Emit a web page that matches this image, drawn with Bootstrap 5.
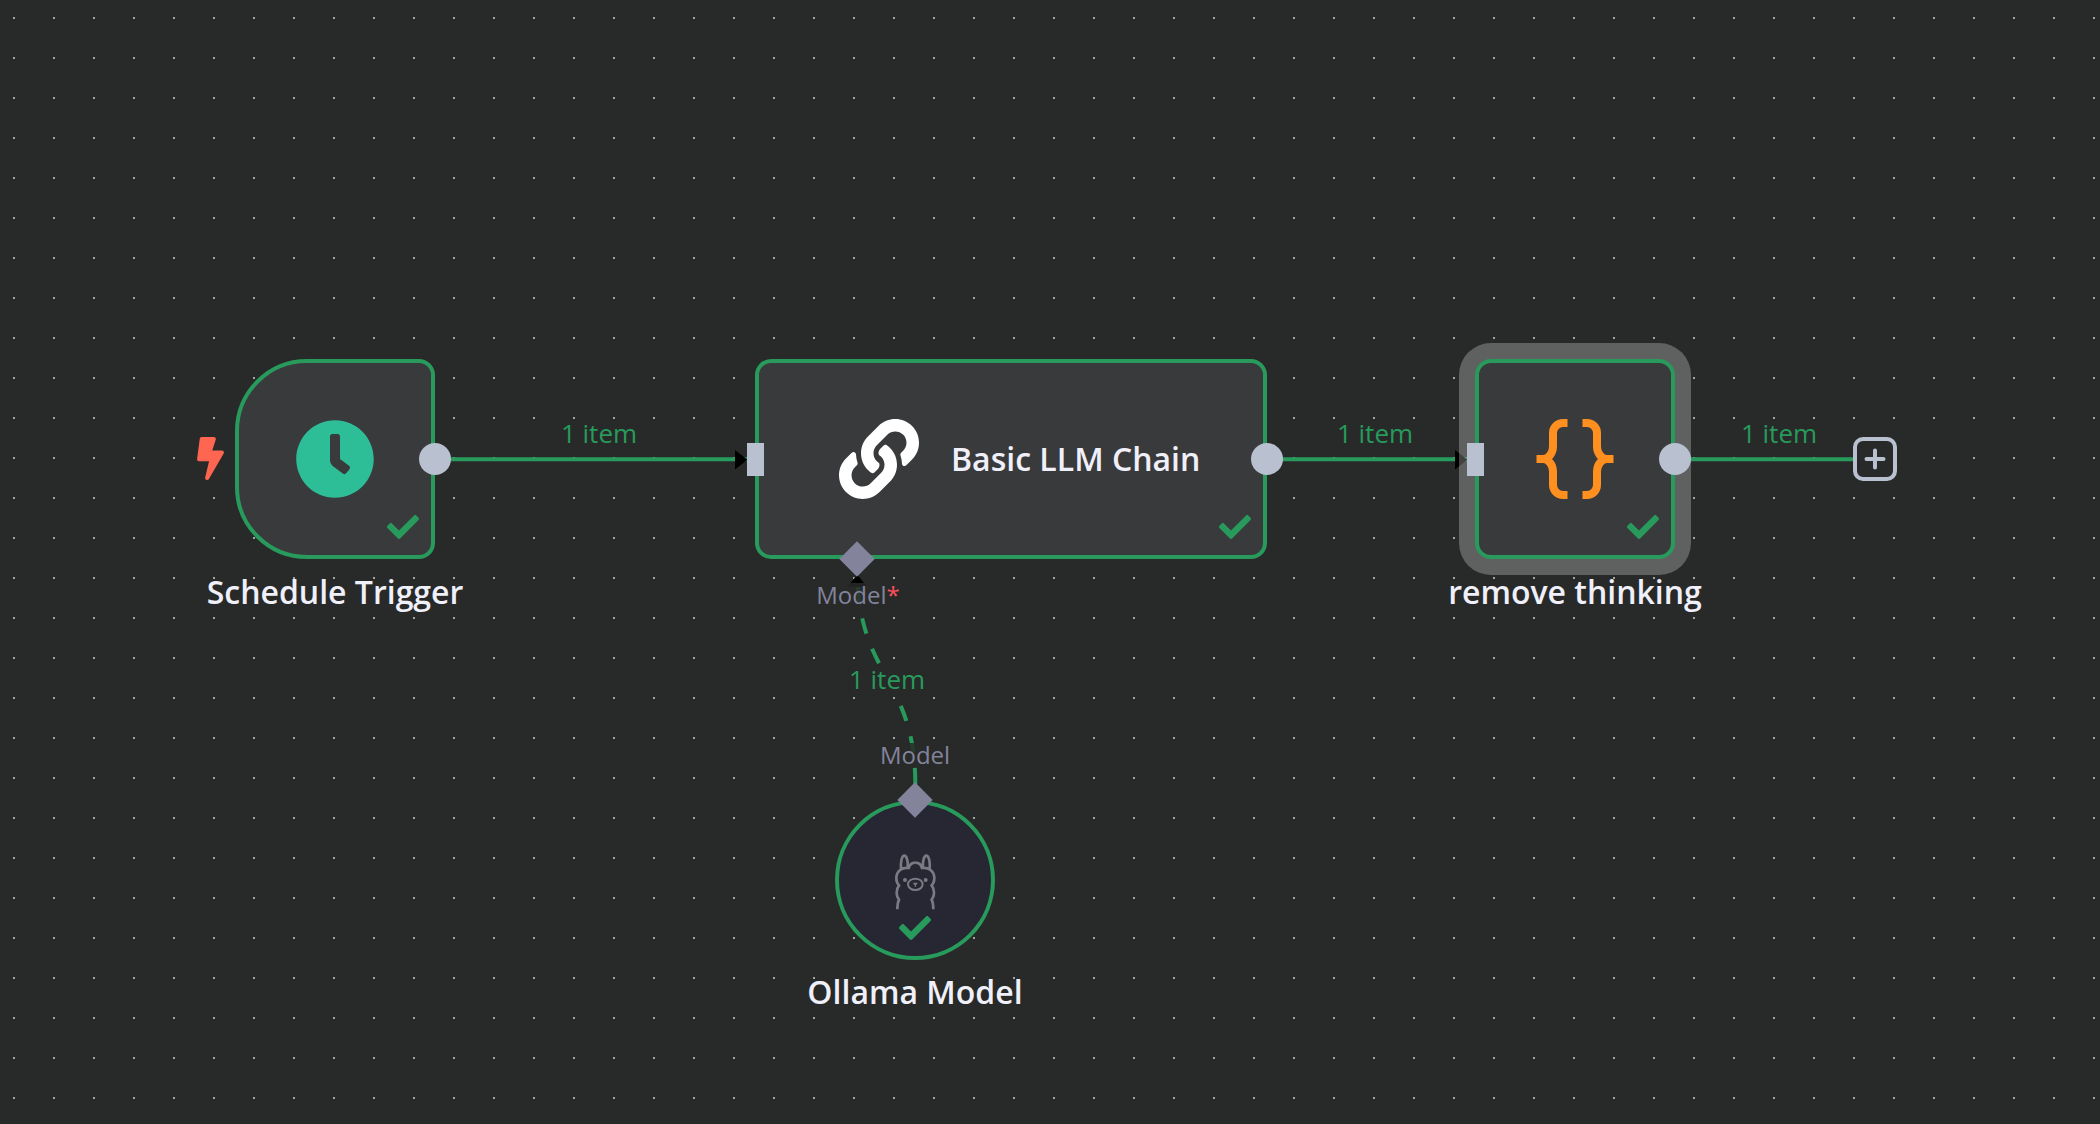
<!DOCTYPE html>
<html lang="en" data-bs-theme="dark">
<head>
<meta charset="utf-8">
<meta name="viewport" content="width=device-width, initial-scale=1">
<title>Workflow canvas</title>
<link rel="stylesheet" href="https://cdn.jsdelivr.net/npm/bootstrap@5.3.0/dist/css/bootstrap.min.css">
<style>
:root { --ok: #279a5c; --canvas: #282a29; --port: #b9c0cf; --sub: #83839c; }
body { background: var(--canvas); font-family: "Open Sans", sans-serif; color: #f0f0fa; }
.flow-canvas {
  background: conic-gradient(from 90deg at 38px 38px, #a3a4a4 90deg, transparent 0) -25px -21px / 40px 40px;
}
.wires { overflow: visible; }
.wire { fill: none; stroke: var(--ok); stroke-width: 4; }
.node { border: 4px solid var(--ok); border-radius: 16px; background: #393a3c; width: 200px; height: 200px; }
.node-trigger { left: 235px; top: 359px; border-radius: 72px 16px 16px 72px; }
.node-chain { left: 755px; top: 359px; width: 512px; padding-left: 80px; gap: 32px; }
.node-code { left: 1475px; top: 359px; box-shadow: 0 0 0 16px rgba(255, 255, 255, .26); }
.node-model { left: 835px; top: 800px; width: 160px; height: 160px; border-radius: 50%; background: #272733; }
.node-name { font-size: 32px; line-height: 44px; font-weight: 600; }
.caption-box { transform: translateX(-50%); }
.cap-trigger { left: 335px; top: 570px; }
.cap-code { left: 1575px; top: 570px; }
.cap-model { left: 915px; top: 970px; }
.wire-label { transform: translateX(-50%); font-size: 26px; line-height: 28px; color: var(--ok); }
.lab-a { left: 599px; top: 419px; }
.lab-b { left: 1375px; top: 419px; }
.lab-c { left: 1779px; top: 419px; }
.lab-d { left: 887px; top: 665px; background: var(--canvas); }
.port-label { transform: translateX(-50%); font-size: 24px; line-height: 24px; color: var(--sub); background: rgba(40, 42, 41, .85); }
.port-in { left: 858px; top: 583px; }
.port-out { left: 915px; top: 743px; }
.required { color: #ff4f5e; }
.port { background: var(--port); top: 80px; }
.port-main-out { width: 32px; height: 32px; border-radius: 50%; right: -20px; }
.port-main-in { width: 17px; height: 33px; left: -12px; }
.diamond { width: 25px; height: 25px; background: var(--sub); transform: translate(-50%, -50%) rotate(45deg); }
.diamond-chain { left: 98px; top: 196px; }
.diamond-model { left: 76px; top: -4px; }
.tick { width: 32px; height: 32px; right: 12px; bottom: 12px; fill: var(--ok); }
.node-model .tick { right: 60px; bottom: 12px; }
.bolt { left: 197px; top: 437px; width: 27px; height: 43px; fill: #ff6652; }
.add-node { left: 1853px; top: 437px; width: 44px; height: 44px; border: 4px solid var(--port); border-radius: 10px; background: var(--canvas); }
.llama { width: 42px; height: 58px; left: 55px; top: 49px; }
</style>
</head>
<body>
<svg class="d-none" aria-hidden="true">
  <symbol id="tick" viewBox="0 0 512 512"><path d="M173.898 439.404l-166.4-166.4c-9.997-9.997-9.997-26.206 0-36.204l36.203-36.204c9.997-9.998 26.207-9.998 36.204 0L192 312.69 432.095 72.596c9.997-9.997 26.207-9.997 36.204 0l36.203 36.204c9.997 9.997 9.997 26.206 0 36.204l-294.4 294.401c-9.998 9.997-26.207 9.997-36.204-.001z"/></symbol>
</svg>
<main class="flow-canvas position-relative overflow-hidden min-vh-100">
  <svg class="wires position-absolute top-0 start-0 w-100 h-100" aria-hidden="true">
    <path class="wire" d="M451 459.3H748M1267 459.3H1468M1690 459.3H1854"/>
    <path class="wire" stroke-dasharray="16 16" d="M915.3 784C915.3 677 857.3 677 857.3 570"/>
    <path d="M735 450v19.5l12.500-9.700zM1455 450v19.500l12.500-9.700zM847.500 587h19.500l-9.700-12.500z"/>
  </svg>

  <svg class="bolt position-absolute" viewBox="0 0 320 512" role="img" aria-label="Trigger"><path d="M296 160H180.600l42.600-129.800C227.200 15 215.700 0 200 0H56C44 0 33.800 8.900 32.200 20.800l-32 240C-1.700 275.200 9.500 288 24 288h118.700L96.600 482.500c-3.600 15.200 8 29.500 23.300 29.500 8.400 0 16.400-4.400 20.800-12l176-304c9.300-15.900-2.200-36-20.700-36z"/></svg>

  <section class="node node-trigger position-absolute d-flex align-items-center justify-content-center">
    <svg width="80" height="80" viewBox="0 0 512 512" fill="#2dbe98" aria-hidden="true"><path d="M256,8C119,8,8,119,8,256S119,504,256,504,504,393,504,256,393,8,256,8Zm92.490,313h0l-20,25a16,16,0,0,1-22.490,2.500h0l-67-49.720a40,40,0,0,1-15-31.230V112a16,16,0,0,1,16-16h32a16,16,0,0,1,16,16V256l58,42.500A16,16,0,0,1,348.490,321Z"/></svg>
    <svg class="tick position-absolute"><use href="#tick"/></svg>
    <span class="port port-main-out position-absolute"></span>
  </section>
  <div class="node-name caption-box cap-trigger position-absolute text-nowrap">Schedule Trigger</div>

  <section class="node node-chain position-absolute d-flex align-items-center">
    <svg class="flex-shrink-0" width="80" height="80" viewBox="0 0 512 512" fill="#fff" aria-hidden="true"><path d="M326.612 185.391c59.747 59.809 58.927 155.698.36 214.590-.11.12-.24.25-.36.37l-67.200 67.200c-59.270 59.270-155.699 59.262-214.960 0-59.270-59.260-59.270-155.700 0-214.960l37.106-37.106c9.840-9.840 26.786-3.300 27.294 10.606.648 17.722 3.826 35.527 9.690 52.721 1.986 5.822.567 12.262-3.783 16.612l-13.087 13.087c-28.026 28.026-28.905 73.660-1.155 101.960 28.024 28.579 74.086 28.749 102.325.51l67.200-67.190c28.191-28.191 28.073-73.757 0-101.830-3.701-3.694-7.429-6.564-10.341-8.569a16.037 16.037 0 0 1-6.947-12.606c-.396-10.567 3.348-21.456 11.698-29.806l21.054-21.055c5.521-5.521 14.182-6.199 20.584-1.731a152.482 152.482 0 0 1 20.522 17.197zM467.547 44.449c-59.261-59.262-155.690-59.270-214.960 0l-67.200 67.200c-.12.12-.25.25-.36.37-58.566 58.892-59.387 154.781.36 214.590a152.454 152.454 0 0 0 20.521 17.196c6.402 4.468 15.064 3.789 20.584-1.731l21.054-21.055c8.350-8.350 12.094-19.239 11.698-29.806a16.037 16.037 0 0 0-6.947-12.606c-2.912-2.005-6.640-4.875-10.341-8.569-28.073-28.073-28.191-73.639 0-101.830l67.200-67.190c28.239-28.239 74.300-28.069 102.325.51 27.750 28.300 26.872 73.934-1.155 101.960l-13.087 13.087c-4.350 4.350-5.769 10.790-3.783 16.612 5.864 17.194 9.042 34.999 9.690 52.721.509 13.906 17.454 20.446 27.294 10.606l37.106-37.106c59.271-59.259 59.271-155.699.001-214.959z"/></svg>
    <span class="node-name text-nowrap">Basic LLM Chain</span>
    <svg class="tick position-absolute"><use href="#tick"/></svg>
    <span class="port port-main-in position-absolute"></span>
    <span class="port port-main-out position-absolute"></span>
    <span class="diamond diamond-chain position-absolute"></span>
  </section>

  <section class="node node-code position-absolute d-flex align-items-center justify-content-center">
    <svg width="80" height="80" viewBox="0 0 80 80" fill="none" stroke="#ff8f1f" stroke-width="8" aria-hidden="true">
      <path id="brace" d="M32.500 4H28a10 10 0 0 0-10 10v13.500C18 34 13.500 40 8 40H1.500M32.500 76H28a10 10 0 0 1-10-10V52.500C18 46 13.500 40 8 40"/>
      <use href="#brace" transform="matrix(-1 0 0 1 80 0)"/>
    </svg>
    <svg class="tick position-absolute"><use href="#tick"/></svg>
    <span class="port port-main-in position-absolute"></span>
    <span class="port port-main-out position-absolute"></span>
  </section>
  <div class="node-name caption-box cap-code position-absolute text-nowrap">remove thinking</div>

  <button type="button" class="add-node position-absolute p-0 d-flex align-items-center justify-content-center" aria-label="Add node">
    <svg width="22" height="22" viewBox="0 0 22 22" stroke="#b9c0cf" stroke-width="4" stroke-linecap="round" aria-hidden="true"><path d="M11 2.500v17M2.500 11h17"/></svg>
  </button>

  <span class="port-label port-in position-absolute text-nowrap">Model<span class="required">*</span></span>
  <span class="port-label port-out position-absolute text-nowrap">Model</span>

  <section class="node node-model position-absolute">
    <svg class="llama position-absolute" viewBox="312 218 126 174" fill="none" stroke="#7a7a84" stroke-width="8" aria-hidden="true">
      <path id="half" d="M376 247c-10 0-17 6-20 16-19-3-37 9-37 31 0 9 3 16 8 21-10 13-9 33 0 43-4 8-5 17-5 29M333 267c-2-24 3-41 10-41s12 17 10 36"/>
      <use href="#half" transform="matrix(-1 0 0 1 752 0)"/>
      <ellipse cx="376" cy="312" rx="22" ry="17" stroke-width="6"/>
      <g fill="#7a7a84" stroke="none"><circle cx="345" cy="299" r="6"/><circle cx="407" cy="299" r="6"/><path d="M370 307h12v4l-4 3v5h-4v-5l-4-3z"/></g>
    </svg>
    <svg class="tick position-absolute"><use href="#tick"/></svg>
    <span class="diamond diamond-model position-absolute"></span>
  </section>
  <div class="node-name caption-box cap-model position-absolute text-nowrap">Ollama Model</div>

  <span class="wire-label lab-a position-absolute text-nowrap">1 item</span>
  <span class="wire-label lab-b position-absolute text-nowrap">1 item</span>
  <span class="wire-label lab-c position-absolute text-nowrap">1 item</span>
  <span class="wire-label lab-d position-absolute text-nowrap">1 item</span>
</main>
<script src="https://cdn.jsdelivr.net/npm/bootstrap@5.3.0/dist/js/bootstrap.bundle.min.js"></script>
</body>
</html>
